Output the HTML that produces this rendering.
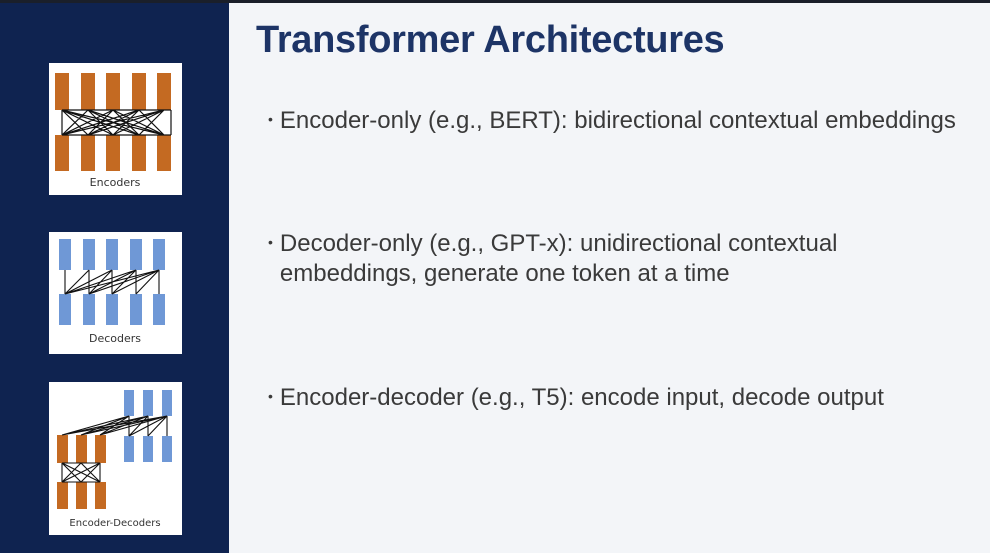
<!DOCTYPE html>
<html><head><meta charset="utf-8"><style>
body{margin:0;width:990px;height:553px;overflow:hidden;background:#f3f5f8;font-family:"Liberation Sans",Arial,sans-serif;position:relative}
.side{position:absolute;left:0;top:0;width:229px;height:553px;background:#0f2350}
.top{position:absolute;left:0;top:0;width:990px;height:3px;background:#1a1f2a}
.title{position:absolute;left:256px;top:19px;font-size:38px;font-weight:bold;color:#1d3466;letter-spacing:-0.3px;white-space:nowrap}
.b{position:absolute;left:268px;font-size:24px;color:#3a3a3a;line-height:29px;white-space:nowrap}
.b span{font-size:14px;vertical-align:4px;margin-right:7px}
.box{position:absolute;left:49px;width:133px;background:#fff}
.lbl{font-family:"DejaVu Sans",sans-serif;font-size:11px;fill:#333}
</style></head><body>
<div class="side"></div><div class="top"></div>
<div class="title">Transformer Architectures</div>
<div class="b" style="top:105px"><span>•</span>Encoder-only (e.g., BERT): bidirectional contextual embeddings</div>
<div class="b" style="top:228px"><span>•</span>Decoder-only (e.g., GPT-x): unidirectional contextual<br><span style="visibility:hidden">•</span>embeddings, generate one token at a time</div>
<div class="b" style="top:382px"><span>•</span>Encoder-decoder (e.g., T5): encode input, decode output</div>

<svg class="box" style="top:63px;height:132px" viewBox="0 0 133 132">
<g fill="#c46a22">
<rect x="6" y="10" width="14" height="37"/><rect x="32" y="10" width="14" height="37"/><rect x="57" y="10" width="14" height="37"/><rect x="83" y="10" width="14" height="37"/><rect x="108" y="10" width="14" height="37"/>
<rect x="6" y="72" width="14" height="36"/><rect x="32" y="72" width="14" height="36"/><rect x="57" y="72" width="14" height="36"/><rect x="83" y="72" width="14" height="36"/><rect x="108" y="72" width="14" height="36"/>
</g>
<g stroke="#111" stroke-width="1.2">
<path d="M13 47V72M122 47V72M13 47H122M13 72H122M13 47L39 72M13 47L64 72M13 47L90 72M13 47L115 72M39 47L13 72M39 47L64 72M39 47L90 72M39 47L115 72M64 47L13 72M64 47L39 72M64 47L90 72M64 47L115 72M90 47L13 72M90 47L39 72M90 47L64 72M90 47L115 72M115 47L13 72M115 47L39 72M115 47L64 72M115 47L90 72"/>
</g>
<text class="lbl" x="66" y="123" text-anchor="middle">Encoders</text>
</svg>

<svg class="box" style="top:232px;height:122px" viewBox="0 0 133 122">
<g fill="#6f98d6">
<rect x="10" y="7" width="12" height="31"/><rect x="34" y="7" width="12" height="31"/><rect x="57" y="7" width="12" height="31"/><rect x="81" y="7" width="12" height="31"/><rect x="104" y="7" width="12" height="31"/>
<rect x="10" y="62" width="12" height="31"/><rect x="34" y="62" width="12" height="31"/><rect x="57" y="62" width="12" height="31"/><rect x="81" y="62" width="12" height="31"/><rect x="104" y="62" width="12" height="31"/>
</g>
<g stroke="#111" stroke-width="1.1" fill="none">
<path d="M16 38V62M40 38V62M63 38V62M87 38V62M110 38V62M16 62L40 38M16 62L63 38M16 62L87 38M16 62L110 38M40 62L63 38M40 62L87 38M40 62L110 38M63 62L87 38M63 62L110 38M87 62L110 38"/>
</g>
<text class="lbl" x="66" y="110" text-anchor="middle">Decoders</text>
</svg>

<svg class="box" style="top:382px;height:153px" viewBox="0 0 133 153">
<g fill="#6f98d6">
<rect x="75" y="8" width="10" height="26"/><rect x="94" y="8" width="10" height="26"/><rect x="113" y="8" width="10" height="26"/>
<rect x="75" y="54" width="10" height="26"/><rect x="94" y="54" width="10" height="26"/><rect x="113" y="54" width="10" height="26"/>
</g>
<g fill="#c46a22">
<rect x="8" y="53" width="11" height="28"/><rect x="27" y="53" width="11" height="28"/><rect x="46" y="53" width="11" height="28"/>
<rect x="8" y="100" width="11" height="27"/><rect x="27" y="100" width="11" height="27"/><rect x="46" y="100" width="11" height="27"/>
</g>
<g stroke="#111" stroke-width="1.1" fill="none">
<path d="M80 34V54M99 34V54M118 34V54M13 53L80 34M13 53L99 34M13 53L118 34M32 53L80 34M32 53L99 34M32 53L118 34M51 53L80 34M51 53L99 34M51 53L118 34M80 54L99 34M80 54L118 34M99 54L118 34"/>
<path d="M13 81V100M51 81V100M13 81H51M13 100H51M13 81L32 100M13 81L51 100M32 81L13 100M32 81L51 100M51 81L13 100M51 81L32 100"/>
</g>
<text class="lbl" x="66" y="144" text-anchor="middle" style="font-size:10px">Encoder-Decoders</text>
</svg>
</body></html>
